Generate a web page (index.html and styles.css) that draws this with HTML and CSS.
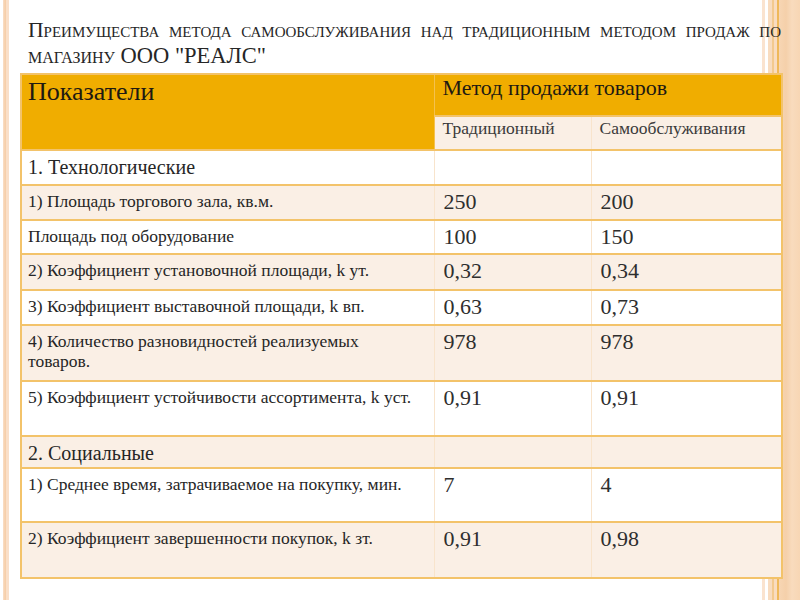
FILE: index.html
```html
<!DOCTYPE html>
<html lang="ru">
<head>
<meta charset="utf-8">
<title>Преимущества метода самообслуживания</title>
<link rel="stylesheet" href="styles.css">
</head>
<body>
<div class="slide">
  <h1 class="title">
    <span class="line1">Преимущества метода самообслуживания над традиционным методом продаж по</span>
    <span class="line2">магазину <span class="caps">ООО "РЕАЛС"</span></span>
  </h1>
  <table class="grid">
    <colgroup>
      <col class="c1"><col class="c2"><col class="c3">
    </colgroup>
    <tr class="hd1">
      <td class="hmain" rowspan="2">Показатели</td>
      <td class="hmethod" colspan="2">Метод продажи товаров</td>
    </tr>
    <tr class="hd2">
      <td class="hsub">Традиционный</td>
      <td class="hsub">Самообслуживания</td>
    </tr>
    <tr class="h35 white">
      <td class="sect">1. Технологические</td><td></td><td></td>
    </tr>
    <tr class="h35 cream">
      <td class="lbl">1) Площадь торгового зала, кв.м.</td><td class="num">250</td><td class="num">200</td>
    </tr>
    <tr class="h34 white">
      <td class="lbl">Площадь под оборудование</td><td class="num">100</td><td class="num">150</td>
    </tr>
    <tr class="h36 cream">
      <td class="lbl">2) Коэффициент установочной площади, k ут.</td><td class="num">0,32</td><td class="num">0,34</td>
    </tr>
    <tr class="h35 white">
      <td class="lbl">3) Коэффициент выставочной площади, k вп.</td><td class="num">0,63</td><td class="num">0,73</td>
    </tr>
    <tr class="h56 cream">
      <td class="lbl">4) Количество разновидностей реализуемых<br>товаров.</td><td class="num">978</td><td class="num">978</td>
    </tr>
    <tr class="h55 white">
      <td class="lbl">5) Коэффициент устойчивости ассортимента, k уст.</td><td class="num">0,91</td><td class="num">0,91</td>
    </tr>
    <tr class="h32 cream">
      <td class="sect">2. Социальные</td><td></td><td></td>
    </tr>
    <tr class="h54 white">
      <td class="lbl">1) Среднее время, затрачиваемое на покупку, мин.</td><td class="num">7</td><td class="num">4</td>
    </tr>
    <tr class="h56 cream">
      <td class="lbl">2) Коэффициент завершенности покупок, k зт.</td><td class="num">0,91</td><td class="num">0,98</td>
    </tr>
  </table>
</div>
</body>
</html>
```

FILE: styles.css
```css
html, body {
  margin: 0;
  padding: 0;
}

body {
  width: 800px;
  height: 600px;
  overflow: hidden;
  font-family: "Liberation Serif", "DejaVu Serif", serif;
  color: #262626;
  background:
    linear-gradient(to right,
      #ffffff 0, #ffffff 3px,
      #fadfc8 3px, #f6cfaa 5px, #f6cfaa 6px, #fadfc8 6px, #fadfc8 9px,
      #ffffff 9px, #ffffff 762px,
      #fae3cf 762px, #fae3cf 765px,
      #ffffff 765px, #ffffff 768px,
      #f8dcc0 768px, #f8dcc0 772px,
      #f3c98e 772px, #f3c98e 774px,
      #f9dcc0 774px, #f9dcc0 777px,
      #efb85a 777px, #efb85a 779px,
      #f7d6b4 779px, #f5d0aa 786px, #f8dbbd 792px, #f7d6b4 800px);
}

.slide {
  padding: 17px 19px 0 20px;
}

.title {
  margin: 0 0 0 8px;
  width: 753px;
  font-weight: normal;
  font-size: 22.5px;
  line-height: 26px;
  color: #262626;
  font-variant: small-caps;
}

.line1 {
  display: block;
  font-size: 21.6px;
  text-align: justify;
  text-align-last: justify;
}

.line2 {
  display: block;
}

.caps {
  font-variant: normal;
}

.grid {
  margin-top: 4px;
  width: 761px;
  border-collapse: collapse;
  table-layout: fixed;
  border: 2px solid #f3c36a;
}

.c1 { width: 413px; }
.c2 { width: 157px; }
.c3 { width: 191px; }

.grid td {
  padding: 0 6px;
  vertical-align: top;
  border-top: 2px solid #f3c36a;
  border-bottom: 2px solid #f3c36a;
  border-left: 1px solid #f8e4cc;
  border-right: 1px solid #f8e4cc;
}

.hd1 { height: 42px; }
.hd2 { height: 34px; }

.hd1 td {
  background: #f0ad00;
}

.hmain {
  font-size: 26px;
  line-height: 30px;
  padding-top: 2px !important;
  color: #1e1a12;
  border-right: 1px solid #f4c14e !important;
}

.hmethod {
  font-size: 22px;
  line-height: 26px;
  padding-top: 0 !important;
  padding-left: 8px !important;
  color: #1e1a12;
}

.hsub {
  background: #faefe5;
  font-size: 17.5px;
  line-height: 20px;
  padding-top: 1px !important;
  padding-left: 8px !important;
  color: #3a3a3a;
}

.white td { background: #ffffff; }
.cream td { background: #faefe5; }

.h32 { height: 32px; }
.h34 { height: 34px; }
.h35 { height: 35px; }
.h36 { height: 36px; }
.h54 { height: 54px; }
.h55 { height: 55px; }
.h56 { height: 56px; }

.sect {
  font-size: 20px;
  line-height: 24px;
  padding-top: 4px !important;
}

.lbl {
  font-size: 17.5px;
  line-height: 20px;
  padding-top: 5px !important;
}

.num {
  font-size: 22px;
  line-height: 24px;
  padding-top: 4px !important;
  padding-left: 9px !important;
  color: #2e2e2e;
}
```
